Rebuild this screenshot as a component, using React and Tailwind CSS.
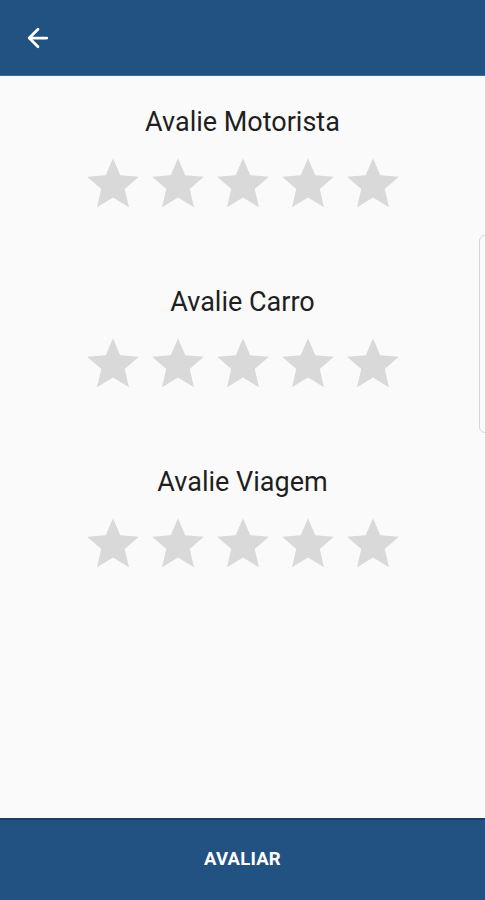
import { ArrowLeft } from "lucide-react";

const Star = () => (
    <svg viewBox="0 0 24 24" className="w-[62px] h-[62px]" fill="#d9d9d9">
        <path d="M12 17.27L18.18 21l-1.64-7.03L22 9.24l-7.19-.61L12 2 9.19 8.63 2 9.24l5.46 4.73L5.82 21z" />
    </svg>
);

const RatingBlock = ({ title }) => (
    <div className="flex flex-col items-center h-[180px]">
        <h2 className="text-[27px] leading-[32px] text-[#1f1f1f] mt-[30px]">{title}</h2>
        <div className="flex gap-[3px] mt-[15px]">
            {[0, 1, 2, 3, 4].map(i => <Star key={i} />)}
        </div>
    </div>
);

export default function App() {
    return (
        <div className="w-[485px] h-[900px] flex flex-col bg-[#fafafa] relative overflow-hidden" style={{ fontFamily: "Roboto, 'Liberation Sans', sans-serif" }}>
            <header className="h-[76px] bg-[#225282] flex items-center px-[23px] shrink-0 border-b border-[#3d6a96]">
                <ArrowLeft size={30} color="#ffffff" strokeWidth={2.2} />
            </header>

            <main className="flex-1 flex flex-col">
                <RatingBlock title="Avalie Motorista" />
                <RatingBlock title="Avalie Carro" />
                <RatingBlock title="Avalie Viagem" />
            </main>

            {/* edge handle on the right */}
            <div className="absolute right-[-6px] top-[235px] w-[12px] h-[198px] rounded-[6px] border border-[#d6d6d6] bg-[#fafafa]" />

            <button className="h-[82px] shrink-0 bg-[#225282] border-t-2 border-[#163d66] text-white font-bold text-[18.5px] tracking-[0.2px]">
                AVALIAR
            </button>
        </div>
    );
}
